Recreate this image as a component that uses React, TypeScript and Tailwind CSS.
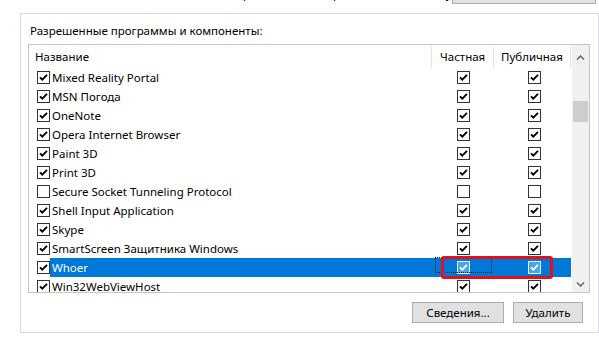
import React from "react";

const rows = [
  { name: "Mixed Reality Portal", on: true, priv: true, pub: true },
  { name: "MSN Погода", on: true, priv: true, pub: true },
  { name: "OneNote", on: true, priv: true, pub: true },
  { name: "Opera Internet Browser", on: true, priv: true, pub: true },
  { name: "Paint 3D", on: true, priv: true, pub: true },
  { name: "Print 3D", on: true, priv: true, pub: true },
  { name: "Secure Socket Tunneling Protocol", on: false, priv: false, pub: false },
  { name: "Shell Input Application", on: true, priv: true, pub: true },
  { name: "Skype", on: true, priv: true, pub: true },
  { name: "SmartScreen Защитника Windows", on: true, priv: true, pub: true },
  { name: "Whoer", on: true, priv: true, pub: true, selected: true },
  { name: "Win32WebViewHost", on: true, priv: true, pub: true },
];

const Box = ({ checked, inverted }: { checked: boolean; inverted?: boolean }) => (
  <svg width="13" height="13" viewBox="0 0 13 13" className="block shrink-0">
    <rect
      x="0.5"
      y="0.5"
      width="12"
      height="12"
      fill={inverted ? "#4aa3e6" : "#fff"}
      stroke={inverted ? "#e8f4ff" : "#333"}
    />
    {checked && (
      <path
        d="M3 6.3 5.3 8.7 10 3.9"
        fill="none"
        stroke={inverted ? "#fff" : "#000"}
        strokeWidth="1.9"
      />
    )}
  </svg>
);

const Chevron = ({ down }: { down?: boolean }) => (
  <svg width="9" height="6" viewBox="0 0 9 6" className="block">
    <path
      d={down ? "M1 1.5 4.5 5 8 1.5" : "M1 4.5 4.5 1 8 4.5"}
      fill="none"
      stroke="#606060"
      strokeWidth="1.4"
    />
  </svg>
);

export default function App() {
  return (
    <div className="relative w-[599px] h-[338px] overflow-hidden bg-white text-[11.5px] text-black font-['Noto_Sans',sans-serif]">
      {/* cut-off description line and "change settings" button */}
      <div className="flex h-[13px] overflow-hidden">
        <div className="ml-[236px] -mt-[14px] leading-[16px] text-[#000] whitespace-nowrap">
          приложения и порты, нажмите кнопку
        </div>
        <div className="ml-auto mr-[3px] -mt-[16px] h-[20px] w-[151px] border border-[#adadad] bg-[#e1e1e1]" />
      </div>

      {/* group box */}
      <div className="ml-[20px] w-[579px] h-[320px] border border-[#d8d8e4] flex flex-col">
        <div className="pt-[9px] pl-[9px] h-[24px] leading-[16px]">
          Разрешенные программы и компоненты:
        </div>

        <div className="mt-[6px] ml-[7px] mr-[8px] h-[249px] border border-[#c4c4d6] flex overflow-hidden">
          <div className="flex-1 flex flex-col">
            {/* header */}
            <div className="flex h-[23px] shrink-0 pt-[1px]">
              <div className="w-[403px] pl-[6px] flex items-center border-r border-[#e5e5e5]">
                Название
              </div>
              <div className="w-[62px] pl-[8px] flex items-center border-r border-[#e5e5e5]">
                Частная
              </div>
              <div className="w-[77px] pl-[7px] flex items-center border-r border-[#e5e5e5]">
                Публичная
              </div>
            </div>

            {rows.map((r) => (
              <div key={r.name} className="flex h-[19px] shrink-0">
                <div className="w-[403px] pl-[8px] flex items-center">
                  <Box checked={r.on} />
                  <div
                    className={`flex-1 h-full pl-[2px] pt-[1px] flex items-center whitespace-nowrap ${
                      r.selected ? "bg-[#0078d7] text-white" : ""
                    }`}
                  >
                    {r.name}
                  </div>
                </div>
                <div
                  className={`relative w-[62px] flex items-center justify-center ${
                    r.selected ? "bg-[#0078d7]" : ""
                  }`}
                >
                  {r.selected && (
                    <div className="absolute left-[3px] right-[2px] -top-[1px] bottom-[4px] border border-dotted border-[#1a1a1a]" />
                  )}
                  <Box checked={r.priv} inverted={r.selected} />
                </div>
                <div
                  className={`w-[77px] pl-[3px] flex items-center justify-center ${
                    r.selected ? "bg-[#0078d7]" : ""
                  }`}
                >
                  <Box checked={r.pub} inverted={r.selected} />
                </div>
              </div>
            ))}
          </div>

          {/* scrollbar */}
          <div className="w-[17px] bg-[#f0f0f0] flex flex-col">
            <div className="h-[20px] flex items-end justify-center pb-[4px]">
              <Chevron />
            </div>
            <div className="flex-1">
              <div className="mt-[36px] mx-[1px] h-[21px] bg-[#cdcdcd]" />
            </div>
            <div className="h-[17px] flex items-center justify-center">
              <Chevron down />
            </div>
          </div>
        </div>

        <div className="mt-[9px] pr-[15px] flex justify-end gap-[9px]">
          <button className="w-[92px] h-[21px] pt-[1px] border border-[#adadad] bg-[#e1e1e1] leading-none">
            Сведения...
          </button>
          <button className="w-[70px] h-[21px] pt-[1px] border border-[#adadad] bg-[#e1e1e1] leading-none">
            Удалить
          </button>
        </div>
      </div>

      {/* red highlight annotation */}
      <div className="absolute left-[441px] top-[256px] w-[112px] h-[23px] border-[3px] border-[#e3101c] rounded-[3px]" />
    </div>
  );
}
